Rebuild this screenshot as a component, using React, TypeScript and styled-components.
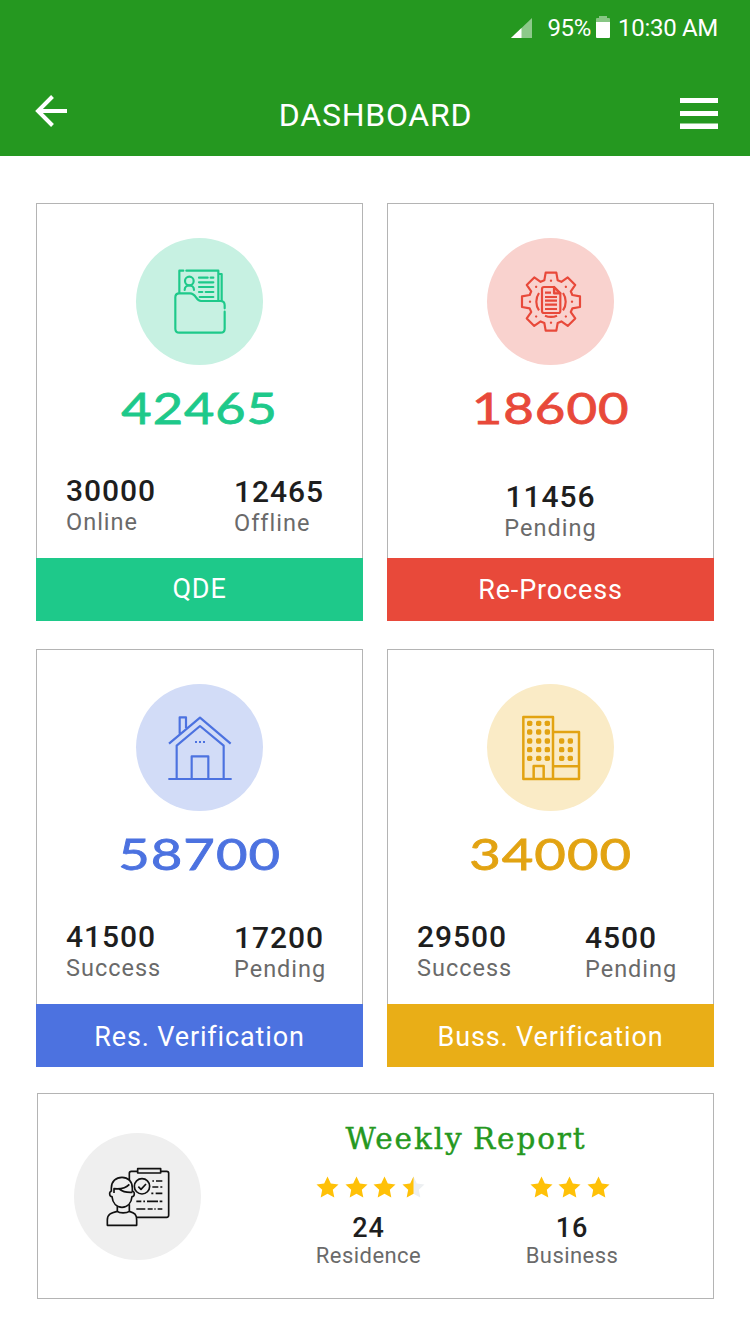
import React from 'react';
import styled, { createGlobalStyle } from 'styled-components';

const GlobalStyle = createGlobalStyle`
  * { box-sizing: border-box; }
  body { margin: 0; background: #fff; font-family: Roboto, sans-serif; }
  svg { display: block; }
`;

const Screen = styled.div`
  width: 750px;
  height: 1334px;
  background: #fff;
  overflow: hidden;
`;

const Header = styled.header`
  height: 156px;
  background: #259820;
  color: #fff;
`;

const StatusBar = styled.div`
  height: 56px;
  padding-right: 32px;
  display: flex;
  justify-content: flex-end;
  align-items: center;
  font-size: 24px;
  line-height: 56px;
  letter-spacing: -0.3px;
`;

const Signal = styled.svg`
  margin-right: 15px;
`;

const Battery = styled.svg`
  margin: 0 8px 2px 5px;
`;

const NavBar = styled.div`
  display: grid;
  grid-template-columns: 120px 1fr 120px;
  height: 100px;
  padding: 0 32px;
`;

const BackIcon = styled.svg`
  margin: 39px 0 0 2px;
`;

const PageTitle = styled.h1`
  margin: 0;
  padding-left: 1px;
  text-align: center;
  font-size: 32px;
  font-weight: 400;
  line-height: 118px;
  letter-spacing: 0.75px;
`;

const MenuIcon = styled.svg`
  justify-self: end;
  margin-top: 42px;
`;

const Main = styled.main`
  padding: 47px 36px 0;
`;

const Cards = styled.div`
  display: grid;
  grid-template-columns: 327px 327px;
  gap: 28px 24px;
`;

const Card = styled.section`
  height: 418px;
  display: flex;
  flex-direction: column;
`;

const CardBody = styled.div`
  flex: 1;
  border: 1px solid #b4b4b4;
  border-bottom: 0;
  padding-top: 34px;
  display: flex;
  flex-direction: column;
  align-items: center;
`;

const Disc = styled.div<{ $bg: string }>`
  width: 127px;
  height: 127px;
  border-radius: 50%;
  background: ${(p) => p.$bg};
  flex: none;
`;

const Total = styled.div<{ $color: string; $stretch: number }>`
  margin: 18px 0 1px;
  height: 50px;
  font-family: Lato, sans-serif;
  font-size: 42.5px;
  line-height: 50px;
  letter-spacing: 0.8px;
  color: ${(p) => p.$color};
  -webkit-text-stroke: 0.8px ${(p) => p.$color};
  transform: scaleX(${(p) => p.$stretch});
`;

const Stats = styled.div<{ $single?: boolean }>`
  align-self: stretch;
  display: grid;
  grid-template-columns: ${(p) => (p.$single ? '1fr' : '168px 1fr')};
  padding: ${(p) => (p.$single ? '46px 0 0' : '40px 0 0 29px')};
  text-align: ${(p) => (p.$single ? 'center' : 'left')};
`;

const Stat = styled.div<{ $drop?: boolean }>`
  padding-top: ${(p) => (p.$drop ? '1px' : '0')};
`;

const StatValue = styled.div`
  font-size: 30px;
  font-weight: 500;
  line-height: 34px;
  letter-spacing: 0.95px;
  color: #1e1e1e;
`;

const StatLabel = styled.div`
  font-size: 23.5px;
  line-height: 28px;
  letter-spacing: 1px;
  color: #6a6a6a;
`;

const CardFooter = styled.div<{ $bg: string; $shift: number }>`
  height: 63px;
  padding-top: ${(p) => p.$shift}px;
  background: ${(p) => p.$bg};
  color: #fff;
  text-align: center;
  font-size: 27px;
  line-height: 62px;
  letter-spacing: 0.85px;
`;

const Report = styled.section`
  margin: 26px 0 0 1px;
  height: 206px;
  border: 1px solid #b4b4b4;
  display: flex;
  padding: 39px 0 0 36px;
`;

const ReportBody = styled.div`
  margin: -8px 0 0 90px;
  width: 350px;
`;

const ReportTitle = styled.h2`
  margin: 0;
  width: 350px;
  text-align: center;
  font-family: 'DejaVu Serif', serif;
  font-size: 29.5px;
  font-weight: 400;
  line-height: 28px;
  letter-spacing: 1.9px;
  word-spacing: -2px;
  color: #259820;
  -webkit-text-stroke: 0.4px #259820;
`;

const Ratings = styled.div`
  display: flex;
  gap: 93.5px;
  padding: 22px 0 0 22.5px;
`;

const Rating = styled.div`
  width: 110px;
  display: flex;
  flex-direction: column;
  align-items: center;
`;

const Stars = styled.div<{ $indent: number }>`
  align-self: flex-start;
  margin-left: ${(p) => p.$indent}px;
  display: flex;
  gap: 5.6px;
  height: 24px;
`;

const RatingValue = styled.div`
  margin-top: 15px;
  font-size: 27px;
  font-weight: 500;
  line-height: 29px;
  letter-spacing: 1px;
  color: #1e1e1e;
`;

const RatingLabel = styled.div`
  font-size: 22px;
  line-height: 26px;
  letter-spacing: 0.45px;
  color: #6a6a6a;
`;

const Glyph = styled.svg<{ $weight?: number }>`
  width: 127px;
  height: 127px;
  fill: none;
  stroke-width: ${(p) => p.$weight ?? 6.5};
  stroke-linejoin: round;
`;

const FolderIcon = () => (
  <Glyph viewBox="18 24 381 381" stroke="#1ec98a" strokeLinecap="round">
    <path d="M148 188V122H160M169 122H265V212M265 132H275V212" />
    <path d="M284 235V226Q284 213 271 213H213C196 213 200 190 180 190H148Q136 190 136 202V296Q136 308 148 308H272Q284 308 284 296V245" />
    <circle cx="178" cy="153" r="13" />
    <path d="M164 180C164 162 192 162 192 180" />
    <path d="M207 143H233M242 143H250M207 157H250M207 171H250M207 186H217M227 186H250M209 201H250" />
  </Glyph>
);

const toothAngles = [0, 45, 90, 135, 180, 225, 270, 315];

const gearPath = toothAngles
  .flatMap((deg) => {
    const a = (deg * Math.PI) / 180;
    return [[-20, -64], [-16, -87], [16, -87], [20, -64]].map(([x, y]) => {
      const px = x * Math.cos(a) - y * Math.sin(a) + 213;
      const py = x * Math.sin(a) + y * Math.cos(a) + 215;
      return `${px.toFixed(1)} ${py.toFixed(1)}`;
    });
  })
  .join('L');

const GearIcon = () => (
  <Glyph viewBox="21 24 381 381" stroke="#e8493a">
    <path d={`M${gearPath}Z`} />
    {toothAngles.map((deg) => (
      <circle key={deg} cx="213" cy="152" r="3.5" fill="#e8493a" stroke="none" transform={`rotate(${deg} 213 215)`} />
    ))}
    <path d="M177 189A46 46 0 0 0 177 241M249 189A46 46 0 0 1 249 241M195 257A46 46 0 0 0 231 257" />
    <path d="M222 171H192Q186 171 186 177V243Q186 249 192 249H235Q241 249 241 243V190Z" />
    <path fill="#e8493a" fillOpacity="0.4" d="M222 171V190H241Z" />
    <path d="M195 188H213M195 201H231M195 212H231M195 224H231M195 237H231" />
  </Glyph>
);

const HouseIcon = () => (
  <Glyph viewBox="18 12 381 381" stroke="#4c72e0">
    <path d="M117 191L210 113L302 191M140 295V197L210 138L281 197V295M115 297H305M185 295V229H235V295M149 161V112H168V144" />
    <path d="M195 186H201M207 186H213M219 186H225" />
  </Glyph>
);

const BuildingIcon = () => (
  <Glyph viewBox="21 12 381 381" stroke="#e2a312" $weight={7.5}>
    <path d="M130 111H219V297H130ZM219 156H297V297H219M219 259H297M161 297V258H191V297" />
    <g fill="#e2a312" stroke="none">
      {[130, 156, 183, 209, 235].flatMap((y) =>
        [149, 176, 202].map((x) => <rect key={`${x}-${y}`} x={x - 8} y={y - 8} width="16" height="16" rx="5" />),
      )}
      {[183, 209, 235].flatMap((y) =>
        [245, 271].map((x) => <rect key={`${x}-${y}`} x={x - 8} y={y - 8} width="16" height="16" rx="5" />),
      )}
    </g>
  </Glyph>
);

const SurveyIcon = () => (
  <Glyph viewBox="42 39 381 381" stroke="#111" $weight={5}>
    <path d="M208 181V160Q208 154 214 154H320Q326 154 326 160V286Q326 292 320 292H230" />
    <path fill="#efefef" d="M233 146H302V159H233Z" />
    <circle cx="246" cy="199" r="23" />
    <path d="M235 200L243 208L258 192" />
    <path d="M277 183H282M288 183H307M277 201H295M301 201H307M274 220H280M287 220H307M229 244H244M250 244H255M261 244H294M299 244H307M229 267H256M263 267H278M283 267H287M293 267H307" />
    <path d="M154 215V204C154 184 168 172 186 172C204 172 217 184 217 204V215M154 214C147 214 147 230 156 230C158 250 170 262 186 262C202 262 214 250 216 230C225 230 225 214 217 214M162 219V206C184 208 200 202 208 193M178 207C190 217 202 218 217 217" />
    <path d="M172 259V274C178 280 200 280 208 274V253M172 274C152 279 142 283 142 300V316H230V300C230 283 224 279 208 274" />
  </Glyph>
);

const STAR = 'M11.5 0.5L14.8 7.6L22.5 8.5L16.8 13.8L18.3 21.6L11.5 17.8L4.7 21.6L6.2 13.8L0.5 8.5L8.2 7.6Z';

const Star = ({ half }: { half?: boolean }) => (
  <svg width="23" height="24" viewBox="0 -1 23 24">
    <path d={STAR} fill={half ? '#eceff1' : '#ffc107'} />
    {half && <path d="M11.5 0.5V17.8L4.7 21.6L6.2 13.8L0.5 8.5L8.2 7.6Z" fill="#ffc107" />}
  </svg>
);

type CardData = {
  title: string;
  total: string;
  color: string;
  bar: string;
  tint: string;
  stretch: number;
  shift: number;
  icon: React.ReactNode;
  stats: [string, string][];
};

const cards: CardData[] = [
  { title: 'QDE', total: '42465', color: '#1ec98a', bar: '#1ec98a', tint: '#c7f1e2', stretch: 1.23, shift: 0, icon: <FolderIcon />, stats: [['30000', 'Online'], ['12465', 'Offline']] },
  { title: 'Re-Process', total: '18600', color: '#e8493a', bar: '#e8493a', tint: '#f9d2ce', stretch: 1.24, shift: 1, icon: <GearIcon />, stats: [['11456', 'Pending']] },
  { title: 'Res. Verification', total: '58700', color: '#4c72e0', bar: '#4c72e0', tint: '#d2dcf7', stretch: 1.28, shift: 2, icon: <HouseIcon />, stats: [['41500', 'Success'], ['17200', 'Pending']] },
  { title: 'Buss. Verification', total: '34000', color: '#e2a312', bar: '#e9ae17', tint: '#faebc6', stretch: 1.28, shift: 2, icon: <BuildingIcon />, stats: [['29500', 'Success'], ['4500', 'Pending']] },
];

export default function App() {
  return (
    <Screen>
      <GlobalStyle />
      <Header>
        <StatusBar>
          <Signal width="21" height="20" viewBox="0 0 21 20">
            <path d="M0 20L21 0V20Z" fill="#fff" fillOpacity="0.48" />
            <path d="M0 20L10.5 10V20Z" fill="#fff" />
          </Signal>
          <span>95%</span>
          <Battery width="14" height="22" viewBox="0 0 14 22">
            <path d="M0 6V3Q0 2 1 2H3V0H11V2H13Q14 2 14 3V6Z" fill="#fff" fillOpacity="0.45" />
            <path d="M0 6H14V21Q14 22 13 22H1Q0 22 0 21Z" fill="#fff" />
          </Battery>
          <span>10:30 AM</span>
        </StatusBar>
        <NavBar>
          <BackIcon width="34" height="32" viewBox="0 0 34 32" fill="none" stroke="#fff" strokeWidth="4">
            <path d="M18.500 1.500L4 16L18.500 30.500M4 16H33" />
          </BackIcon>
          <PageTitle>DASHBOARD</PageTitle>
          <MenuIcon width="38" height="31" viewBox="0 0 38 31" fill="#fff">
            <path d="M0 0H38V5H0ZM0 13H38V18H0ZM0 25.500H38V31H0Z" />
          </MenuIcon>
        </NavBar>
      </Header>
      <Main>
        <Cards>
          {cards.map((c) => (
            <Card key={c.title}>
              <CardBody>
                <Disc $bg={c.tint}>{c.icon}</Disc>
                <Total $color={c.color} $stretch={c.stretch}>{c.total}</Total>
                <Stats $single={c.stats.length === 1}>
                  {c.stats.map(([value, label], i) => (
                    <Stat key={label} $drop={i === 1}>
                      <StatValue>{value}</StatValue>
                      <StatLabel>{label}</StatLabel>
                    </Stat>
                  ))}
                </Stats>
              </CardBody>
              <CardFooter $bg={c.bar} $shift={c.shift}>{c.title}</CardFooter>
            </Card>
          ))}
        </Cards>
        <Report>
          <Disc $bg="#efefef"><SurveyIcon /></Disc>
          <ReportBody>
            <ReportTitle>Weekly Report</ReportTitle>
            <Ratings>
              <Rating>
                <Stars $indent={2.5}><Star /><Star /><Star /><Star half /></Stars>
                <RatingValue>24</RatingValue>
                <RatingLabel>Residence</RatingLabel>
              </Rating>
              <Rating>
                <Stars $indent={12.5}><Star /><Star /><Star /></Stars>
                <RatingValue>16</RatingValue>
                <RatingLabel>Business</RatingLabel>
              </Rating>
            </Ratings>
          </ReportBody>
        </Report>
      </Main>
    </Screen>
  );
}
